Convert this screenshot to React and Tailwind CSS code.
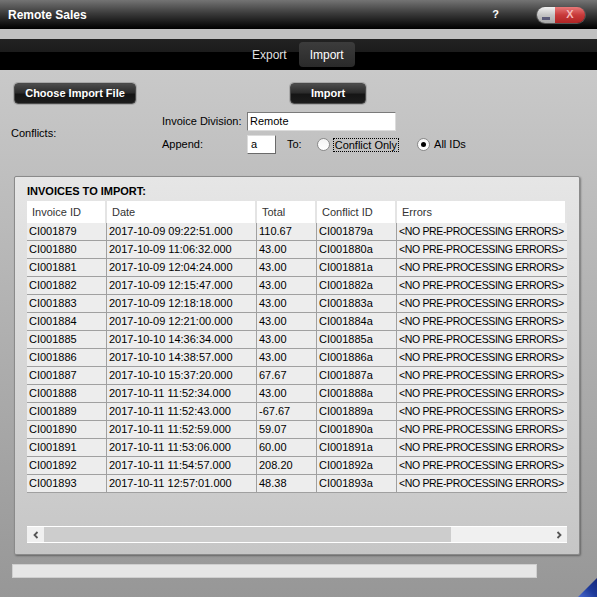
import React from "react";

const rows = [
  ["CI001879", "2017-10-09 09:22:51.000", "110.67"],
  ["CI001880", "2017-10-09 11:06:32.000", "43.00"],
  ["CI001881", "2017-10-09 12:04:24.000", "43.00"],
  ["CI001882", "2017-10-09 12:15:47.000", "43.00"],
  ["CI001883", "2017-10-09 12:18:18.000", "43.00"],
  ["CI001884", "2017-10-09 12:21:00.000", "43.00"],
  ["CI001885", "2017-10-10 14:36:34.000", "43.00"],
  ["CI001886", "2017-10-10 14:38:57.000", "43.00"],
  ["CI001887", "2017-10-10 15:37:20.000", "67.67"],
  ["CI001888", "2017-10-11 11:52:34.000", "43.00"],
  ["CI001889", "2017-10-11 11:52:43.000", "-67.67"],
  ["CI001890", "2017-10-11 11:52:59.000", "59.07"],
  ["CI001891", "2017-10-11 11:53:06.000", "60.00"],
  ["CI001892", "2017-10-11 11:54:57.000", "208.20"],
  ["CI001893", "2017-10-11 12:57:01.000", "48.38"],
];

const cols = [
  { label: "Invoice ID", w: "w-[80px]" },
  { label: "Date", w: "w-[150px]" },
  { label: "Total", w: "w-[60px]" },
  { label: "Conflict ID", w: "w-[80px]" },
  { label: "Errors", w: "w-[170px]" },
];

function DarkButton({ children, className }) {
  return (
    <button
      className={
        "h-[21px] rounded-[4px] border border-[#4a4a4a] bg-[linear-gradient(to_bottom,#4c4c4c,#2c2c2c_45%,#151515_55%,#1c1c1c)] text-[11px] font-bold text-white shadow-[0_0_0_1px_#a8a8a8] " +
        className
      }
    >
      {children}
    </button>
  );
}

function Radio({ checked }) {
  return (
    <span className="flex h-[13px] w-[13px] items-center justify-center rounded-full border border-[#8a8a8a] bg-[linear-gradient(to_bottom,#f4f4f4,#ffffff)]">
      {checked && <span className="h-[5px] w-[5px] rounded-full bg-black" />}
    </span>
  );
}

export default function App() {
  return (
    <div className="relative flex h-[597px] w-[597px] flex-col overflow-hidden font-['Liberation_Sans',Arial,sans-serif]">
      {/* title bar */}
      <div className="flex h-[29px] items-center bg-[linear-gradient(to_bottom,#747474,#3c3c3c_45%,#0c0c0c_88%,#000)] pl-[8px]">
        <span className="text-[12px] font-bold text-white">Remote Sales</span>
        <div className="flex-1" />
        <span className="text-[11px] font-bold text-white">?</span>
        <div className="ml-[38px] mr-[12px] flex h-[16px] w-[48px] overflow-hidden rounded-full shadow-[0_0_0_1px_#555]">
          <div className="flex w-[18px] items-end justify-center bg-[linear-gradient(to_bottom,#f2f2f2,#c4c4c4_50%,#a8a8a8)] pb-[3px]">
            <span className="h-[3px] w-[8px] bg-[#5a5a78]" />
          </div>
          <div className="flex flex-1 items-center justify-center bg-[linear-gradient(to_bottom,#e87a7a,#c83a3a_50%,#b02424)] text-[11px] font-bold text-[#f4b8b8]">
            X
          </div>
        </div>
      </div>

      <div className="h-[10px] bg-[#c0c0c0]" />

      {/* tabs */}
      <div className="flex h-[31px] items-center bg-[linear-gradient(to_bottom,#222_0,#1c1c1c_13px,#000_13px)] pl-[252px]">
        <span className="text-[12px] text-[#e0e0e0]">Export</span>
        <div className="ml-[12px] flex h-[25px] w-[56px] items-center justify-center rounded-[4px] bg-[linear-gradient(to_bottom,#3c3c3c,#333_50%,#2a2a2a)] text-[12px] text-white">
          Import
        </div>
      </div>

      {/* main */}
      <div className="relative flex flex-1 flex-col bg-gradient-to-b from-[#c9c9c9] to-[#979797]">
        <div className="mt-[13px] flex">
          <DarkButton className="ml-[14px] w-[122px]">Choose Import File</DarkButton>
          <DarkButton className="ml-[154px] w-[76px]">Import</DarkButton>
        </div>

        <div className="mt-[8px] flex items-center text-[11px] text-black">
          <span className="ml-[11px] w-[151px]">Conflicts:</span>
          <div className="flex flex-col gap-[4px]">
            <div className="flex h-[19px] items-center">
              <span className="w-[85px]">Invoice Division:</span>
              <div className="flex h-[19px] w-[149px] items-center border border-[#7a7a7a] border-b-[#dcdcdc] border-r-[#dcdcdc] bg-white pl-[2px]">
                Remote
              </div>
            </div>
            <div className="flex h-[19px] items-center">
              <span className="w-[85px]">Append:</span>
              <div className="flex h-[19px] w-[29px] items-center border border-[#dcdcdc] border-b-[#6a6a6a] border-r-[#6a6a6a] bg-white pl-[3px]">
                a
              </div>
              <span className="ml-[11px]">To:</span>
              <span className="ml-[15px]">
                <Radio />
              </span>
              <span className="ml-[3px] border border-dotted border-black px-[1px] leading-[12px]">
                Conflict Only
              </span>
              <span className="ml-[18px]">
                <Radio checked />
              </span>
              <span className="ml-[4px]">All IDs</span>
            </div>
          </div>
        </div>

        {/* panel */}
        <div className="ml-[14px] mt-[22px] flex h-[379px] w-[566px] flex-col rounded-[2px] border border-[#8a8a8a] bg-gradient-to-b from-[#e6e6e6] to-[#c6c6c6] shadow-[1px_1px_2px_rgba(0,0,0,0.35)]">
          <div className="ml-[12px] mt-[5px] h-[19px] text-[11px] font-bold leading-[19px] text-black">
            INVOICES TO IMPORT:
          </div>
          <div className="ml-[12px] w-[540px] overflow-hidden text-[11px]">
            <div className="flex h-[22px] bg-white">
              {cols.map((c) => (
                <div
                  key={c.label}
                  className={c.w + " flex shrink-0 items-center border-r-2 border-[#e4e4e4] pl-[5px] text-[#333]"}
                >
                  {c.label}
                </div>
              ))}
            </div>
            {rows.map(([id, date, total]) => (
              <div key={id} className="flex h-[18px] border-b border-[#a0a0a0] bg-[#ededed] text-black">
                <div className="flex w-[80px] shrink-0 items-center border-r border-[#a0a0a0] pl-[2px]">{id}</div>
                <div className="flex w-[150px] shrink-0 items-center border-r border-[#a0a0a0] pl-[2px]">{date}</div>
                <div className="flex w-[60px] shrink-0 items-center border-r border-[#a0a0a0] pl-[2px]">{total}</div>
                <div className="flex w-[80px] shrink-0 items-center border-r border-[#a0a0a0] pl-[2px]">{id}a</div>
                <div className="flex w-[170px] shrink-0 items-center whitespace-nowrap pl-[2px] text-[10.5px] tracking-[-0.35px]">
                  &lt;NO PRE-PROCESSING ERRORS&gt;
                </div>
              </div>
            ))}
          </div>

          <div className="flex-1" />

          {/* horizontal scrollbar */}
          <div className="mb-[11px] ml-[12px] flex h-[17px] w-[540px] border-y border-white bg-[#f0f0f0]">
            <div className="flex w-[17px] items-center justify-center">
              <svg width="8" height="8" viewBox="0 0 8 8">
                <path d="M5.5 1 L2.5 4 L5.5 7" fill="none" stroke="#555" strokeWidth="1.8" />
              </svg>
            </div>
            <div className="w-[407px] bg-[#cdcdcd]" />
            <div className="flex-1" />
            <div className="flex w-[17px] items-center justify-center">
              <svg width="8" height="8" viewBox="0 0 8 8">
                <path d="M2.5 1 L5.5 4 L2.5 7" fill="none" stroke="#555" strokeWidth="1.8" />
              </svg>
            </div>
          </div>
        </div>

        {/* progress */}
        <div className="ml-[12px] mt-[9px] h-[14px] w-[525px] border border-[#cfcfcf] bg-[#e6e6e6]" />

        {/* resize grip */}
        <svg className="absolute bottom-0 right-0" width="20" height="20" viewBox="0 0 20 20">
          <defs>
            <linearGradient id="grip" x1="0" y1="1" x2="1" y2="0">
              <stop offset="0" stopColor="#4a6ad0" />
              <stop offset="0.5" stopColor="#1e3a9a" />
              <stop offset="1" stopColor="#16287a" />
            </linearGradient>
          </defs>
          <polygon points="20,1 20,20 1,20" fill="url(#grip)" />
        </svg>
      </div>
    </div>
  );
}
